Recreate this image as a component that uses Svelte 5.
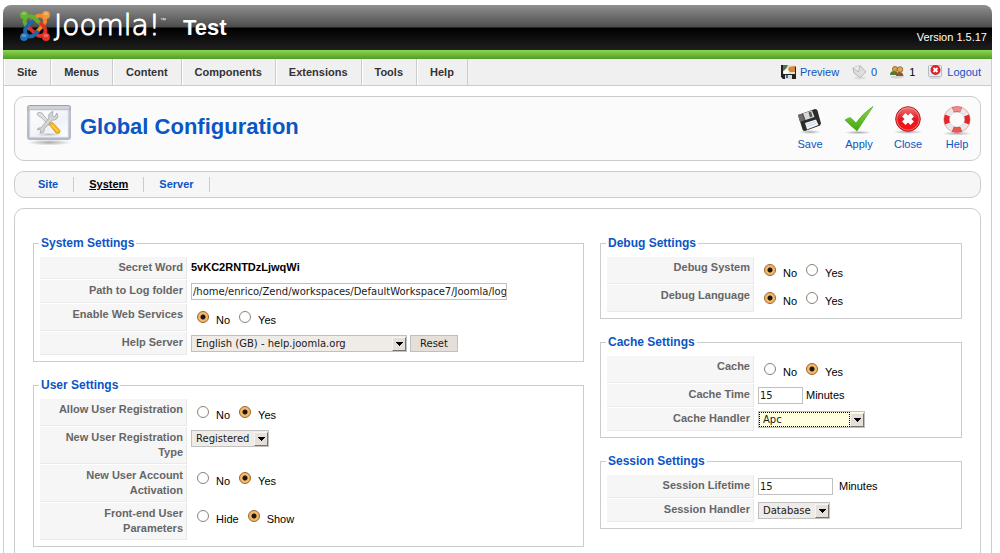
<script>
  const menu = ['Site', 'Menus', 'Content', 'Components', 'Extensions', 'Tools', 'Help'];
  const tabs = ['Site', 'System', 'Server'];

  const leftSets = [
    {
      title: 'System Settings',
      rows: [
        { label: 'Secret Word', kind: 'static', value: '5vKC2RNTDzLjwqWi' },
        { label: 'Path to Log folder', kind: 'text', id: 'log-path', width: 316, value: '/home/enrico/Zend/workspaces/DefaultWorkspace7/Joomla/logs' },
        { label: 'Enable Web Services', kind: 'radio', id: 'xmlrpc', options: ['No', 'Yes'], value: 'No' },
        { label: 'Help Server', kind: 'select', id: 'help-server', width: 216, value: 'English (GB) - help.joomla.org', button: 'Reset' }
      ]
    },
    {
      title: 'User Settings',
      rows: [
        { label: 'Allow User Registration', kind: 'radio', id: 'allow-registration', options: ['No', 'Yes'], value: 'Yes' },
        { label: 'New User Registration Type', kind: 'select', id: 'user-type', width: 78, value: 'Registered' },
        { label: 'New User Account Activation', kind: 'radio', id: 'activation', options: ['No', 'Yes'], value: 'Yes' },
        { label: 'Front-end User Parameters', kind: 'radio', id: 'user-params', options: ['Hide', 'Show'], value: 'Show' }
      ]
    }
  ];

  const rightSets = [
    {
      title: 'Debug Settings',
      rows: [
        { label: 'Debug System', kind: 'radio', id: 'debug-system', options: ['No', 'Yes'], value: 'No' },
        { label: 'Debug Language', kind: 'radio', id: 'debug-language', options: ['No', 'Yes'], value: 'No' }
      ]
    },
    {
      title: 'Cache Settings',
      rows: [
        { label: 'Cache', kind: 'radio', id: 'cache', options: ['No', 'Yes'], value: 'Yes' },
        { label: 'Cache Time', kind: 'text', id: 'cache-time', width: 45, value: '15', unit: 'Minutes' },
        { label: 'Cache Handler', kind: 'select', id: 'cache-handler', width: 107, value: 'Apc', active: true }
      ]
    },
    {
      title: 'Session Settings',
      rows: [
        { label: 'Session Lifetime', kind: 'text', id: 'session-lifetime', width: 75, value: '15', unit: 'Minutes', spaced: true },
        { label: 'Session Handler', kind: 'select', id: 'session-handler', width: 72, value: 'Database' }
      ]
    }
  ];
</script>

{#snippet settings(set)}
  <fieldset>
    <legend>{set.title}</legend>
    <table>
      <tbody>
        {#each set.rows as row}
          <tr>
            <th scope="row">
              {#if row.kind === 'text' || row.kind === 'select'}
                <label for={row.id}>{row.label}</label>
              {:else}
                <span id={row.id}>{row.label}</span>
              {/if}
            </th>
            <td>
              {#if row.kind === 'static'}
                <strong>{row.value}</strong>
              {:else if row.kind === 'radio'}
                <div class="radios" role="radiogroup" aria-labelledby={row.id}>
                  {#each row.options as option}
                    <label>
                      <input type="radio" name={row.id} value={option} checked={option === row.value} />
                      <span>{option}</span>
                    </label>
                  {/each}
                </div>
              {:else if row.kind === 'text'}
                <div class="line" class:spaced={row.spaced}>
                  <input type="text" id={row.id} value={row.value} style:width="{row.width}px" />
                  {#if row.unit}<span>{row.unit}</span>{/if}
                </div>
              {:else}
                <div class="line">
                  <div class="select" class:active={row.active} style:width="{row.width}px">
                    <select id={row.id}><option>{row.value}</option></select>
                  </div>
                  {#if row.button}<button type="button" class="reset">{row.button}</button>{/if}
                </div>
              {/if}
            </td>
          </tr>
        {/each}
      </tbody>
    </table>
  </fieldset>
{/snippet}

<div class="page">
  <header>
    <div class="brand">
      <svg class="mark" width="32" height="32" viewBox="0 0 32 32" fill="none" aria-hidden="true">
        <g stroke-linecap="butt" stroke-linejoin="round" stroke-width="3.800">
          <path d="M11 19.500L8 16.500Q3.500 11.500 7 7.500Q11.500 4 16 8.500L22 14.500" stroke="#5fae2d" />
          <path d="M11 19.500L8 16.500Q3.500 11.500 7 7.500Q11.500 4 16 8.500L22 14.500" stroke="#f08a24" transform="rotate(90 16 16)" />
          <path d="M11 19.500L8 16.500Q3.500 11.500 7 7.500Q11.500 4 16 8.500L22 14.500" stroke="#e0302a" transform="rotate(180 16 16)" />
          <path d="M11 19.500L8 16.500Q3.500 11.500 7 7.500Q11.500 4 16 8.500L22 14.500" stroke="#1b66b0" transform="rotate(270 16 16)" />
          <path d="M13 5.800L16 8.500L19 11.500" stroke="#5fae2d" />
        </g>
        <circle cx="5" cy="5" r="3.900" fill="#64b52e" />
        <circle cx="27" cy="5" r="3.900" fill="#f3953a" />
        <circle cx="5" cy="27" r="3.900" fill="#2272ba" />
        <circle cx="27" cy="27" r="3.900" fill="#e6352c" />
        <g fill="#fff" opacity=".25">
          <ellipse cx="5" cy="3.500" rx="2.500" ry="1.500" />
          <ellipse cx="27" cy="3.500" rx="2.500" ry="1.500" />
          <ellipse cx="5" cy="25.500" rx="2.500" ry="1.500" />
          <ellipse cx="27" cy="25.500" rx="2.500" ry="1.500" />
        </g>
      </svg>
      <span class="word">Joomla!<sup>™</sup></span>
    </div>
    <span class="sitename">Test</span>
    <span class="version">Version 1.5.17</span>
  </header>

  <div class="menubar">
    <nav>
      {#each menu as item}<a href="#menu">{item}</a>{/each}
    </nav>
    <div class="status">
      <a href="#preview">
        <svg width="15" height="15" viewBox="0 0 15 15" aria-hidden="true">
          <path d="M0 0h13l2 2v12H2l-2-2z" fill="#222" />
          <path d="M2 0h12v9H2z" fill="#e9e2c8" />
          <path d="M2 0h5l-2 4-3 2z" fill="#477a4a" />
          <path d="M8 2l6-1v6H9l-2-2z" fill="#d98438" />
          <path d="M3 6l3-3 2 4-1 2H3z" fill="#fff" />
          <path d="M4 10h7v4H4z" fill="#ddd" /><path d="M5 10h2v3H5z" fill="#3c6fa0" />
        </svg>
        <span>Preview</span>
      </a>
      <a href="#messages">
        <svg width="15" height="15" viewBox="0 0 15 15" aria-hidden="true">
          <ellipse cx="8" cy="13" rx="6" ry="1.500" fill="#ddd" />
          <path d="M1 3l7-2.500L14 7l-6 5.500L2 8z" fill="#dedede" stroke="#a8a8a8" stroke-width=".8" />
          <path d="M1 3l5.500 4L8 .5" fill="#ececec" stroke="#b0b0b0" stroke-width=".8" />
        </svg>
        <span>0</span>
      </a>
      <span class="users">
        <svg width="15" height="15" viewBox="0 0 15 15" aria-hidden="true">
          <ellipse cx="7" cy="12" rx="7" ry="1.500" fill="#d4d4d4" />
          <path d="M0 10q0-4 4-4t4 4z" fill="#4d7d38" /><path d="M6 11q0-4 3.500-4t4 4z" fill="#91572a" />
          <circle cx="5" cy="4" r="2.600" fill="#d9a04a" stroke="#8a5a1c" stroke-width=".7" />
          <circle cx="10" cy="4.500" r="2.800" fill="#e0a850" stroke="#7d5218" stroke-width=".7" />
        </svg>
        <span>1</span>
      </span>
      <a href="#logout">
        <svg width="15" height="15" viewBox="0 0 15 15" aria-hidden="true">
          <rect x=".5" y=".5" width="13" height="11" rx="1" fill="#e8ebf5" stroke="#b4b8c4" />
          <ellipse cx="7" cy="13" rx="6" ry="1" fill="#d8d8d8" />
          <circle cx="7.500" cy="5" r="5" fill="#dd2026" />
          <path d="M5.500 3l4 4m0-4l-4 4" stroke="#fff" stroke-width="1.800" />
        </svg>
        <span>Logout</span>
      </a>
    </div>
  </div>

  <main>
    <section class="box heading">
      <svg width="46" height="42" viewBox="0 0 46 42" aria-hidden="true">
        <defs>
          <linearGradient id="win" x1="0" y1="0" x2="1" y2="1">
            <stop offset="0" stop-color="#fff" /><stop offset=".6" stop-color="#eef2f8" /><stop offset="1" stop-color="#fff" />
          </linearGradient>
          <linearGradient id="frame" x1="0" y1="0" x2="0" y2="1">
            <stop offset="0" stop-color="#9a9ca6" /><stop offset=".2" stop-color="#bcc0cc" /><stop offset="1" stop-color="#b3b8c8" />
          </linearGradient>
          <radialGradient id="shade"><stop offset="0" stop-color="#aaa" /><stop offset="1" stop-color="#aaa" stop-opacity="0" /></radialGradient>
        </defs>
        <ellipse cx="22" cy="37.500" rx="22" ry="3" fill="url(#shade)" />
        <rect x="0" y="0" width="44" height="35" rx="3" fill="url(#frame)" />
        <rect x="1.500" y="1" width="41" height="3.500" rx="1" fill="#d0d1d6" />
        <rect x="3" y="5.500" width="38" height="26.500" fill="url(#win)" stroke="#e5e8ee" />
        <ellipse cx="22" cy="29.500" rx="14" ry="2" fill="url(#shade)" opacity=".7" />
        <path d="M12 7.500l3 .5 2 3 7 7.500-2 2-7.500-8-3-1.500-1.500-2.500z" fill="#e2e2e2" stroke="#9a9a9a" stroke-width=".7" />
        <path d="M14 23l8-10q-1.500-5 4-6.500l-1 4 2.500 1.500 2.500-4q2 4-.5 6-2 1.500-4 1L17 24q1 2-1 3.500l-3 .5 1-2.500-1.500-1-2 .5q0-3 3.500-2z" fill="#d5d5d5" stroke="#9a9a9a" stroke-width=".7" />
        <path d="M22 19q2-2.500 4-1l7 7.500q.5 3-2.500 3-2.500-.5-3.500-3z" fill="#f8b719" stroke="#cf8a12" stroke-width=".7" />
        <path d="M24.500 19.500l6 6.500" stroke="#ffe28a" stroke-width="1" />
      </svg>
      <h1>Global Configuration</h1>
      <div class="toolbar">
        <button type="button">
          <svg width="32" height="32" viewBox="0 0 32 32" aria-hidden="true">
            <ellipse cx="16" cy="27" rx="11" ry="2" fill="url(#shade)" />
            <path d="M4 10L21 4q2 0 2.500 1.500L27 18.500l-1 2L11 26q-2 0-2.500-1.500z" fill="#2b2b2b" />
            <path d="M4 10l4-1.500 3 6.500-5 2z" fill="#6b6b6b" />
            <path d="M9 8.500l9-3 2.500 6.500-9 3z" fill="#d9d9d9" /><path d="M14.500 7.500l2.500-1 1.500 5-2.500 1z" fill="#555" />
            <path d="M11 18l11-3.500 2.500 5.500L13 24.500z" fill="#f5f5f5" />
            <path d="M12.500 19.500l9-3m-8.500 5l9-3" stroke="#b9cfee" stroke-width=".8" />
          </svg>
          <span>Save</span>
        </button>
        <button type="button">
          <svg width="32" height="32" viewBox="0 0 32 32" aria-hidden="true">
            <defs><linearGradient id="tick" x1="0" y1="0" x2="0" y2="1"><stop offset="0" stop-color="#8bd84c" /><stop offset="1" stop-color="#3ea80a" /></linearGradient></defs>
            <ellipse cx="15" cy="27.500" rx="14" ry="1.800" fill="url(#shade)" />
            <path d="M2 15q2-1.500 5-2.500 3.500 2.500 6 5.500Q20 8 30 1.500 22.500 13 14 26 8 21 2 15z" fill="url(#tick)" stroke="#3a9c14" stroke-width=".6" />
          </svg>
          <span>Apply</span>
        </button>
        <button type="button">
          <svg width="32" height="32" viewBox="0 0 32 32" aria-hidden="true">
            <defs><linearGradient id="stop" x1="0" y1="0" x2="0" y2="1"><stop offset="0" stop-color="#f07a7e" /><stop offset=".5" stop-color="#e01b22" /><stop offset="1" stop-color="#ff1015" /></linearGradient></defs>
            <ellipse cx="16" cy="27" rx="15" ry="2" fill="url(#shade)" />
            <circle cx="16" cy="14" r="12.300" fill="url(#stop)" stroke="#b81a20" />
            <circle cx="16" cy="14" r="11.200" fill="none" stroke="#f59a9c" stroke-width=".7" />
            <path d="M11.800 9.800l8.400 8.400m0-8.400l-8.400 8.400" stroke="#fff" stroke-width="4.800" />
          </svg>
          <span>Close</span>
        </button>
        <button type="button">
          <svg width="32" height="32" viewBox="0 0 32 32" aria-hidden="true">
            <ellipse cx="16" cy="28.500" rx="15" ry="2" fill="url(#shade)" />
            <circle cx="16" cy="14.500" r="10.300" fill="none" stroke="#e8e8e8" stroke-width="5.600" />
            <circle cx="16" cy="14.500" r="10.300" fill="none" stroke="#e3262a" stroke-width="5.600" pathLength="360" stroke-dasharray="46 44" stroke-dashoffset="23" />
            <path d="M12 4.800q4-1.600 8 0" stroke="#f08a8c" stroke-width="4.500" fill="none" />
            <path d="M12 24.200q4 1.600 8 0" stroke="#ea5558" stroke-width="4.500" fill="none" />
            <circle cx="16" cy="14.500" r="13.200" fill="none" stroke="#d66" stroke-width=".5" />
            <circle cx="16" cy="14.500" r="7.500" fill="none" stroke="#ccc" stroke-width=".6" />
          </svg>
          <span>Help</span>
        </button>
      </div>
    </section>

    <nav class="box tabs">
      {#each tabs as tab}<a href="#tab" class:current={tab === 'System'}>{tab}</a>{/each}
    </nav>

    <form class="box panel">
      <div class="column">
        {#each leftSets as set}{@render settings(set)}{/each}
      </div>
      <div class="column">
        {#each rightSets as set}{@render settings(set)}{/each}
      </div>
    </form>
  </main>
</div>

<style>
  :global(body) { background: #fff; }
  .page {
    padding: 5px 8px 0 3px;
    font: 11px/15px "Liberation Sans", Arial, sans-serif;
    color: #000;
  }
  a { color: #0b55c4; text-decoration: none; }
  svg { display: block; flex: none; }

  header {
    display: flex;
    align-items: center;
    height: 45px;
    padding: 0 5px 9px 16px;
    border-radius: 8px 8px 0 0;
    background: linear-gradient(#909090 0, #4c4c4c 22px, #000 23px, #1f1f1f 45px, #8ad850 45px, #539a26 54px);
    color: #fff;
  }
  .brand { display: flex; align-items: center; gap: 3px; width: 164px; margin-top: -4px; }
  .word { position: relative; font: 200 28px/32px "DejaVu Sans", sans-serif; -webkit-text-stroke: 1px #fff; }
  .word sup { position: absolute; top: 0; left: 100%; font-size: 6px; line-height: 20px; -webkit-text-stroke: 0; }
  .sitename { font-size: 22px; line-height: 26px; font-weight: bold; }
  .version { margin: 20px 0 0 auto; }

  .menubar {
    display: flex;
    justify-content: space-between;
    height: 26px;
    border: 1px solid #ccc;
    border-top: 0;
    background: #f0f0f0;
    line-height: 26px;
  }
  .menubar nav { display: flex; }
  .menubar nav a {
    padding: 0 13px 0 12px;
    border-left: 1px solid #fff;
    border-right: 1px solid #ccc;
    color: #333;
    font-weight: bold;
  }
  .status { display: flex; gap: 13px; padding-right: 10px; }
  .status a, .users { display: flex; align-items: center; gap: 4px; }

  main {
    display: flex;
    flex-direction: column;
    gap: 10px;
    padding: 10px;
    border: 1px solid #ccc;
    border-top: 0;
  }
  .box { border: 1px solid #ccc; border-radius: 10px; }
  .heading {
    display: flex;
    align-items: flex-start;
    height: 55px;
    padding: 8px 0 0 12px;
    background: #fbfbfb;
  }
  h1 { margin: 8px 0 0 7px; font-size: 22px; line-height: 28px; color: #0b55c4; }
  .toolbar { display: flex; gap: 3px; margin-left: auto; }
  .toolbar button {
    display: flex;
    flex-direction: column;
    align-items: center;
    width: 46px;
    padding: 0;
    border: 0;
    background: none;
    color: #0b55c4;
    font: inherit;
    cursor: pointer;
  }
  .tabs { display: flex; align-items: center; padding: 5px 8px; background: #f6f6f6; }
  .tabs a { padding: 0 15px; border-right: 1px solid #ccc; font-weight: bold; }
  .tabs .current { color: #000; text-decoration: underline; }

  .panel {
    display: grid;
    grid-template-columns: minmax(0, 551fr) minmax(0, 362fr);
    gap: 16px;
    padding: 27px 18px;
  }
  .column { display: flex; flex-direction: column; gap: 16px; }
  fieldset { min-width: 0; margin: 0; padding: 5px; border: 1px solid #ccc; }
  legend { padding: 0 2px; color: #0b55c4; font-size: 12px; line-height: 15px; font-weight: bold; }
  table { width: 100%; border-spacing: 1px; }
  th, td { padding: 3px; vertical-align: top; text-align: left; }
  th {
    box-sizing: border-box;
    width: 147px;
    border-right: 1px solid #e9e9e9;
    border-bottom: 1px solid #e9e9e9;
    background: #f6f6f6;
    color: #666;
    text-align: right;
  }
  .line { display: flex; align-items: center; gap: 3px; }
  .spaced { gap: 6px; }
  .radios { display: flex; gap: 9px; height: 21px; padding-left: 6px; }
  .radios label { display: flex; align-items: flex-start; gap: 7px; }
  .radios span { padding-top: 6px; }
  .radios input {
    appearance: none;
    box-sizing: border-box;
    width: 12px;
    height: 12px;
    margin: 4px 0 0;
    border: 1px solid #8f8073;
    border-radius: 50%;
    background: #fff;
  }
  .radios input:checked {
    border-color: #96622a;
    background: radial-gradient(circle, #1c1712 0 2px, #f6b968 3px 100%);
  }
  input[type='text'], select, .reset {
    box-sizing: border-box;
    height: 17px;
    margin: 0;
    border: 1px solid #c0c0c0;
    border-radius: 0;
    font: 10px/15px "DejaVu Sans", sans-serif;
    color: #1a1a1a;
  }
  input[type='text'] { padding: 0 0 0 1px; background: #fff; }
  .select { position: relative; display: flex; }
  select { appearance: none; width: 100%; padding: 0 16px 0 4px; background: #efebe7; outline: none; }
  .select::after {
    content: '';
    position: absolute;
    top: 2px;
    right: 1px;
    box-sizing: border-box;
    width: 14px;
    height: 14px;
    border: 1px solid;
    border-color: #f6f4f1 #77736d #77736d #f6f4f1;
    background: linear-gradient(#000, #000) 3px 4px / 7px 1px no-repeat,
      linear-gradient(#000, #000) 4px 5px / 5px 1px no-repeat,
      linear-gradient(#000, #000) 5px 6px / 3px 1px no-repeat,
      linear-gradient(#000, #000) 6px 7px / 1px 1px no-repeat, #e4dfd8;
    pointer-events: none;
  }
  .active select { background: #ffffdd; }
  .active::before {
    content: '';
    position: absolute;
    inset: 1px 15px 1px 1px;
    border: 1px dotted #000;
    pointer-events: none;
  }
  .reset { padding: 0 9px; background: #e4dfd8; cursor: pointer; }
</style>
